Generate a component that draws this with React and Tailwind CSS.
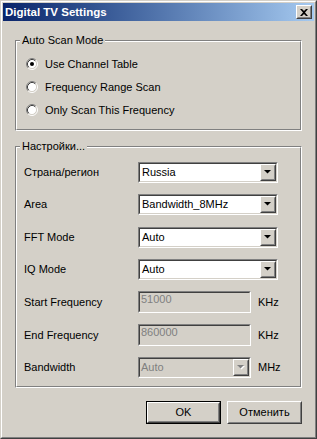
import React from "react";

function Radio({ checked }) {
  return (
    <svg width="12" height="12" viewBox="0 0 12 12" className="block shrink-0">
      <circle cx="6" cy="6" r="4.5" fill="#ffffff" />
      <path d="M2.11 9.89 A5.5 5.5 0 0 1 9.89 2.11" fill="none" stroke="#808080" strokeWidth="1" />
      <path d="M9.89 2.11 A5.5 5.5 0 0 1 2.11 9.89" fill="none" stroke="#ffffff" strokeWidth="1" />
      <path d="M2.82 9.18 A4.5 4.5 0 0 1 9.18 2.82" fill="none" stroke="#404040" strokeWidth="1" />
      <path d="M9.18 2.82 A4.5 4.5 0 0 1 2.82 9.18" fill="none" stroke="#d4d0c8" strokeWidth="1" />
      {checked && <circle cx="6" cy="6" r="2" fill="#000000" />}
    </svg>
  );
}

function Sunken({ className, innerClassName, children }) {
  return (
    <div className={`border border-t-[#808080] border-l-[#808080] border-r-white border-b-white ${className}`}>
      <div className={`h-full w-full border border-t-[#404040] border-l-[#404040] border-r-[#d4d0c8] border-b-[#d4d0c8] ${innerClassName}`}>
        {children}
      </div>
    </div>
  );
}

function Raised({ className, innerClassName, children }) {
  return (
    <div className={`border border-t-white border-l-white border-r-[#404040] border-b-[#404040] bg-[#d4d0c8] ${className}`}>
      <div className={`h-full w-full border border-t-[#d4d0c8] border-l-[#d4d0c8] border-r-[#808080] border-b-[#808080] ${innerClassName}`}>
        {children}
      </div>
    </div>
  );
}

function Arrow({ disabled }) {
  return (
    <svg width="8" height="5" viewBox="0 0 8 5" className="block">
      {disabled && <polygon points="1,1 8,1 4.5,4.5" fill="#ffffff" />}
      <polygon points="0,0 7,0 3.5,3.5" fill={disabled ? "#808080" : "#000000"} />
    </svg>
  );
}

function Combo({ value, width, disabled }) {
  return (
    <Sunken
      className={`${width} h-[21px] shrink-0`}
      innerClassName={`flex items-center ${disabled ? "bg-[#d4d0c8] text-[#808080]" : "bg-white text-black"}`}
    >
      <span className={`flex-1 ${disabled ? "pl-[1px]" : "pl-[2px]"}`}>{value}</span>
      <Raised className="w-[16px] h-[17px]" innerClassName="flex items-center justify-center">
        <Arrow disabled={disabled} />
      </Raised>
    </Sunken>
  );
}

function Edit({ value }) {
  return (
    <Sunken className="w-[113px] h-[22px] shrink-0" innerClassName="bg-[#d4d0c8] text-[#808080] pl-[1px] pt-0">
      <span>{value}</span>
    </Sunken>
  );
}

function Group({ label, className, innerClassName, children }) {
  return (
    <div className={`relative ml-[12px] w-[287px] border border-t-[#808080] border-l-[#808080] border-r-white border-b-white ${className}`}>
      <div className={`h-full w-full border border-t-white border-l-white border-r-[#808080] border-b-[#808080] ${innerClassName}`}>
        {children}
      </div>
      <span className="absolute top-[-7px] left-[4px] px-[2px] bg-[#d4d0c8] leading-[13px]">{label}</span>
    </div>
  );
}

function Row({ label, children, mt }) {
  return (
    <div className={`flex items-center ${mt}`}>
      <span className="w-[114px] shrink-0">{label}</span>
      {children}
    </div>
  );
}

export default function App() {
  return (
    <div className="w-[317px] h-[439px] bg-[#d4d0c8] font-['Liberation_Sans',Arial,sans-serif] text-[11px] leading-[13px] text-black">
      <div className="w-full h-full border border-t-[#d4d0c8] border-l-[#d4d0c8] border-r-[#404040] border-b-[#404040]">
        <div className="w-full h-full border border-t-white border-l-white border-r-[#808080] border-b-[#808080] p-px flex flex-col">
          <div className="h-[18px] shrink-0 flex items-center justify-between bg-linear-to-r from-[#0a246a] to-[#a6caf0] pl-[2px] pr-[2px]">
            <span className="text-white font-bold text-[11.5px] leading-[14px]">Digital TV Settings</span>
            <Raised className="w-[16px] h-[14px]" innerClassName="flex items-center justify-center">
              <svg width="8" height="7" viewBox="0 0 8 7" className="block">
                <path d="M0 0 L2 0 L4 2 L6 0 L8 0 L5 3.5 L8 7 L6 7 L4 5 L2 7 L0 7 L3 3.5 Z" fill="#000000" />
              </svg>
            </Raised>
          </div>

          <Group label="Auto Scan Mode" className="mt-[19px] h-[91px] shrink-0" innerClassName="pt-[16px] pl-[9px] flex flex-col gap-[11px]">
            <div className="flex items-center h-[12px] gap-[7px]">
              <Radio checked />
              <span>Use Channel Table</span>
            </div>
            <div className="flex items-center h-[12px] gap-[7px]">
              <Radio />
              <span>Frequency Range Scan</span>
            </div>
            <div className="flex items-center h-[12px] gap-[7px]">
              <Radio />
              <span>Only Scan This Frequency</span>
            </div>
          </Group>

          <Group label="Настройки..." className="mt-[15px] h-[242px] shrink-0" innerClassName="pt-[14px] pl-[7px] flex flex-col">
            <Row label="Страна/регион" mt="">
              <Combo value="Russia" width="w-[140px]" />
            </Row>
            <Row label="Area" mt="mt-[11px]">
              <Combo value="Bandwidth_8MHz" width="w-[140px]" />
            </Row>
            <Row label="FFT Mode" mt="mt-[12px]">
              <Combo value="Auto" width="w-[140px]" />
            </Row>
            <Row label="IQ Mode" mt="mt-[11px]">
              <Combo value="Auto" width="w-[140px]" />
            </Row>
            <Row label="Start Frequency" mt="mt-[11px]">
              <Edit value="51000" />
              <span className="ml-[7px]">KHz</span>
            </Row>
            <Row label="End Frequency" mt="mt-[11px]">
              <Edit value="860000" />
              <span className="ml-[7px]">KHz</span>
            </Row>
            <Row label="Bandwidth" mt="mt-[11px]">
              <Combo value="Auto" width="w-[113px]" disabled />
              <span className="ml-[7px]">MHz</span>
            </Row>
          </Group>

          <div className="mt-[13px] mr-[12px] flex justify-end gap-[6px]">
            <div className="w-[75px] h-[23px] border border-black">
              <div className="h-full w-full border border-t-white border-l-white border-r-[#404040] border-b-[#404040]">
                <div className="h-full w-full border border-t-[#d4d0c8] border-l-[#d4d0c8] border-r-[#808080] border-b-[#808080] flex items-center justify-center">
                  OK
                </div>
              </div>
            </div>
            <Raised className="w-[75px] h-[23px]" innerClassName="flex items-center justify-center">
              Отменить
            </Raised>
          </div>
        </div>
      </div>
    </div>
  );
}
